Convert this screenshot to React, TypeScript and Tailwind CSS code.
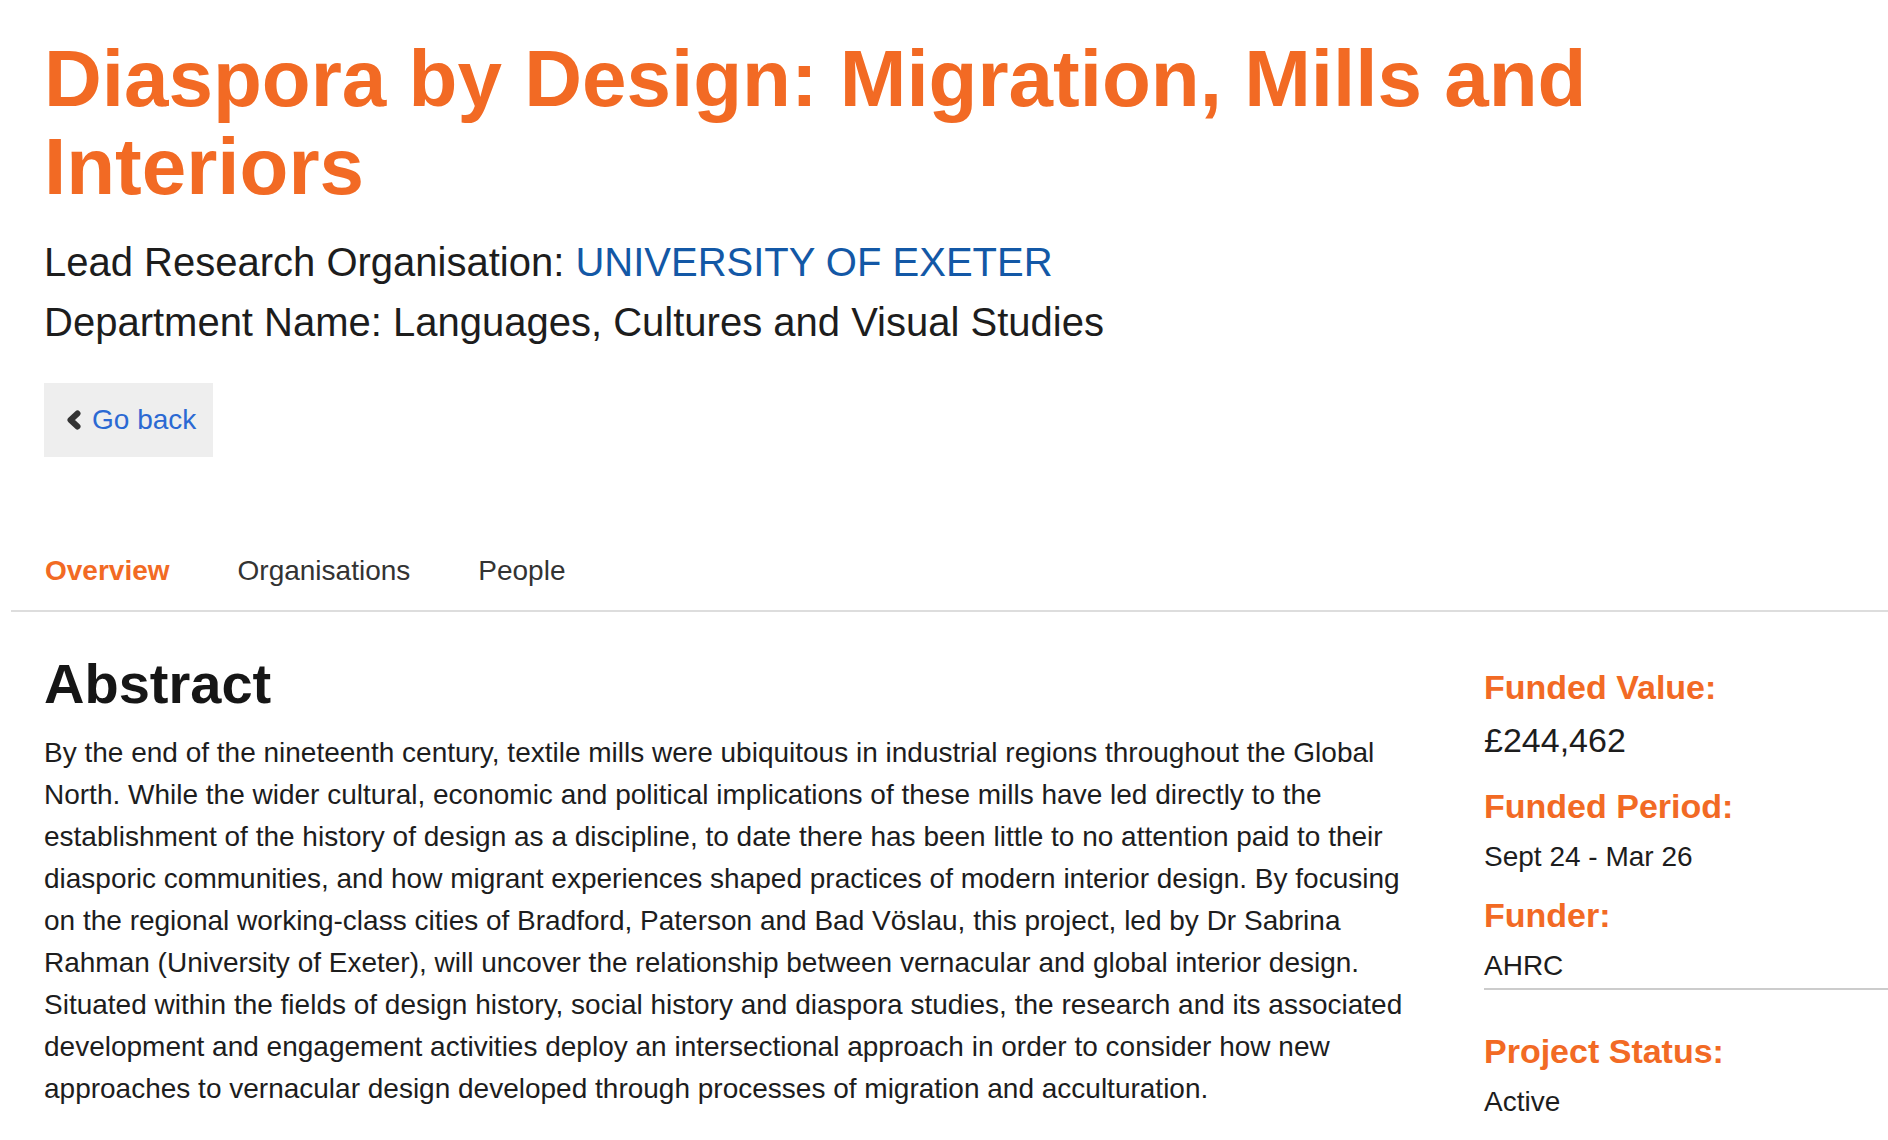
import { useState } from 'react';

const tabs = ['Overview', 'Organisations', 'People'];

const abstractText =
  'By the end of the nineteenth century, textile mills were ubiquitous in industrial regions throughout the Global North. While the wider cultural, economic and political implications of these mills have led directly to the establishment of the history of design as a discipline, to date there has been little to no attention paid to their diasporic communities, and how migrant experiences shaped practices of modern interior design. By focusing on the regional working-class cities of Bradford, Paterson and Bad Vöslau, this project, led by Dr Sabrina Rahman (University of Exeter), will uncover the relationship between vernacular and global interior design. Situated within the fields of design history, social history and diaspora studies, the research and its associated development and engagement activities deploy an intersectional approach in order to consider how new approaches to vernacular design developed through processes of migration and acculturation.';

function ChevronLeft() {
  return (
    <svg width="17" height="20" viewBox="0 0 17 20" className="shrink-0">
      <polyline points="12.5,3.5 5.5,10 12.5,16.5" fill="none" stroke="#333" strokeWidth="6" strokeLinecap="round" strokeLinejoin="round" />
    </svg>
  );
}

export default function App() {
  const [active, setActive] = useState('Overview');

  return (
    <div className="min-h-screen overflow-hidden bg-white font-['Liberation_Sans',Arial,Helvetica,sans-serif] text-[#1d1d1d]">
      {/* Header */}
      <div className="pl-[44px]">
        <h1 className="max-w-[1700px] pt-[35px] text-[80px] font-bold leading-[88px] text-[#f26a24]">
          Diaspora by Design: Migration, Mills and Interiors
        </h1>
        <p className="mt-[21px] text-[40px] leading-[60px]">
          Lead Research Organisation: <a href="#" className="text-[#1358a6]">UNIVERSITY OF EXETER</a>
        </p>
        <p className="text-[40px] leading-[60px]">Department Name: Languages, Cultures and Visual Studies</p>
        <button className="mt-[31px] flex h-[74px] items-center gap-[10px] bg-[#eeeeee] pl-[21px] pr-[17px]">
          <ChevronLeft />
          <span className="text-[28px] leading-none text-[#2b69d3]">Go back</span>
        </button>
      </div>

      {/* Tabs */}
      <ul className="ml-[11px] mt-[93px] flex border-b-2 border-[#dddddd]">
        {tabs.map((t) => (
          <li key={t}>
            <button
              onClick={() => setActive(t)}
              className={
                t === active
                  ? 'px-[34px] pb-[18px] text-[28px] font-bold leading-[42px] text-[#f26a24]'
                  : 'px-[34px] pb-[18px] text-[28px] leading-[42px] text-[#333333]'
              }
            >
              {t}
            </button>
          </li>
        ))}
      </ul>

      {/* Body */}
      <div className="flex pl-[44px]">
        <div className="w-[1380px] shrink-0">
          <h2 className="mt-[41px] text-[56px] font-bold leading-[62px] text-[#161616]">Abstract</h2>
          <p className="mt-[17px] text-[28px] leading-[42px]">{abstractText}</p>
        </div>

        <div className="ml-[60px] flex-1">
          <h3 className="mt-[55px] text-[34px] font-bold leading-[40px] text-[#f26a24]">Funded Value:</h3>
          <p className="mt-[13px] text-[34px] leading-[40px]">£244,462</p>
          <h3 className="mt-[26px] text-[34px] font-bold leading-[40px] text-[#f26a24]">Funded Period:</h3>
          <p className="mt-[11px] text-[28px] leading-[40px]">Sept 24 - Mar 26</p>
          <h3 className="mt-[18px] text-[34px] font-bold leading-[40px] text-[#f26a24]">Funder:</h3>
          <p className="mt-[11px] border-b-2 border-[#cccccc] pb-[2px] text-[28px] leading-[40px]">AHRC</p>
          <h3 className="mt-[41px] text-[34px] font-bold leading-[40px] text-[#f26a24]">Project Status:</h3>
          <p className="mt-[11px] text-[28px] leading-[40px]">Active</p>
        </div>
      </div>
    </div>
  );
}
